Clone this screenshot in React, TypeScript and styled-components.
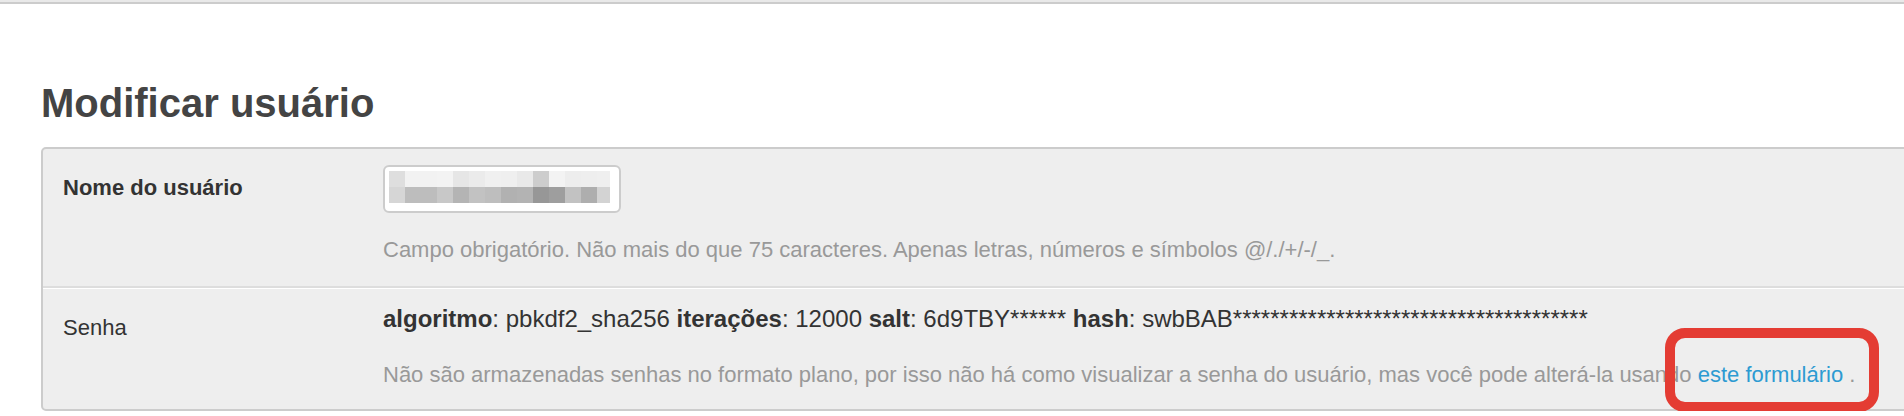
import React from "react";
import styled, { createGlobalStyle } from "styled-components";

const GlobalStyle = createGlobalStyle`
  html, body {
    margin: 0;
    padding: 0;
    background: #ffffff;
    overflow: hidden;
  }
  body {
    font-family: "Liberation Sans", Arial, Helvetica, sans-serif;
    color: #333333;
  }
`;

const TopStrip = styled.div`
  height: 2px;
  background: #e9e9e9;
  border-bottom: 2px solid #cccccc;
`;

const Content = styled.div`
  padding: 75px 0 0 41px;
`;

const Title = styled.h1`
  margin: 0 0 20px 0;
  font-size: 40px;
  line-height: 48px;
  font-weight: bold;
  color: #444444;
`;

const Fieldset = styled.div`
  margin-right: -20px;
  background: #eeeeee;
  border: 2px solid #cccccc;
  border-radius: 5px;
`;

const Row = styled.div<{ $last?: boolean; $top: number; $bottom: number }>`
  display: flex;
  padding: ${(p) => p.$top}px 20px ${(p) => p.$bottom}px 20px;
  border-bottom: ${(p) => (p.$last ? "none" : "2px solid #dddddd")};
  border-top: ${(p) => (p.$last ? "1px solid #ffffff" : "none")};
`;

const Label = styled.div<{ $bold?: boolean }>`
  width: 320px;
  flex-shrink: 0;
  padding-top: 10px;
  font-size: 22px;
  line-height: 26px;
  font-weight: ${(p) => (p.$bold ? "bold" : "normal")};
  color: #333333;
`;

const Field = styled.div`
  display: flex;
  flex-direction: column;
  align-items: flex-start;
`;

const InputBox = styled.div`
  width: 226px;
  height: 36px;
  padding: 4px;
  background: #ffffff;
  border: 2px solid #cccccc;
  border-radius: 6px;
`;

const Help = styled.p<{ $gap: number }>`
  margin: ${(p) => p.$gap}px 0 0 0;
  font-size: 22px;
  line-height: 26px;
  color: #999999;
  white-space: nowrap;
`;

const Value = styled.p`
  margin: 0;
  font-size: 24px;
  line-height: 28px;
  color: #333333;
  white-space: nowrap;

  strong {
    font-weight: bold;
  }
`;

const LinkWrap = styled.span`
  position: relative;
`;

const Link = styled.a`
  color: #2d9bd2;
  text-decoration: none;
`;

const Annotation = styled.span`
  position: absolute;
  left: -33px;
  top: -34px;
  width: 194px;
  height: 64px;
  border: 10px solid #e43c33;
  border-radius: 20px;
  pointer-events: none;
`;

const topRow = ["#dedede", "#f2f2f2", "#f2f2f2", "#f3f3f3", "#e6e6e6", "#ebebeb", "#f0f0f0", "#efefef", "#e9e9e9", "#cdcdcd", "#f3f3f3", "#ededed", "#eeeeee", "#efefef"];
const bottomRow = ["#d6d6d6", "#bdbdbd", "#bdbdbd", "#c8c8c8", "#b4b4b4", "#c2c2c2", "#bebebe", "#b1b1b1", "#b3b3b3", "#979797", "#9e9e9e", "#c2c2c2", "#aeaeae", "#d3d3d3"];

// pixelated (redacted) user name inside the input
const Mosaic = () => (
  <svg width="221" height="32" viewBox="0 0 221 32">
    {topRow.map((c, i) => (
      <rect key={"t" + i} x={i * 16} y={0} width={16} height={16} fill={c} />
    ))}
    {bottomRow.map((c, i) => (
      <rect key={"b" + i} x={i * 16} y={16} width={16} height={16} fill={c} />
    ))}
  </svg>
);

const App = () => {
  return (
    <>
      <GlobalStyle />
      <TopStrip />
      <Content>
        <Title>Modificar usuário</Title>
        <Fieldset>
          <Row $top={16} $bottom={23}>
            <Label $bold>Nome do usuário</Label>
            <Field>
              <InputBox>
                <Mosaic />
              </InputBox>
              <Help $gap={24}>
                Campo obrigatório. Não mais do que 75 caracteres. Apenas letras, números e símbolos @/./+/-/_.
              </Help>
            </Field>
          </Row>
          <Row $top={16} $bottom={21} $last>
            <Label>Senha</Label>
            <Field>
              <Value>
                <strong>algoritmo</strong>: pbkdf2_sha256 <strong>iterações</strong>: 12000{" "}
                <strong>salt</strong>: 6d9TBY****** <strong>hash</strong>:
                swbBAB**************************************
              </Value>
              <Help $gap={29}>
                Não são armazenadas senhas no formato plano, por isso não há como visualizar a senha do usuário, mas
                você pode alterá-la usando{" "}
                <LinkWrap>
                  <Link href="#">este formulário</Link>
                  <Annotation />
                </LinkWrap>{" "}
                .
              </Help>
            </Field>
          </Row>
        </Fieldset>
      </Content>
    </>
  );
};

export default App;
